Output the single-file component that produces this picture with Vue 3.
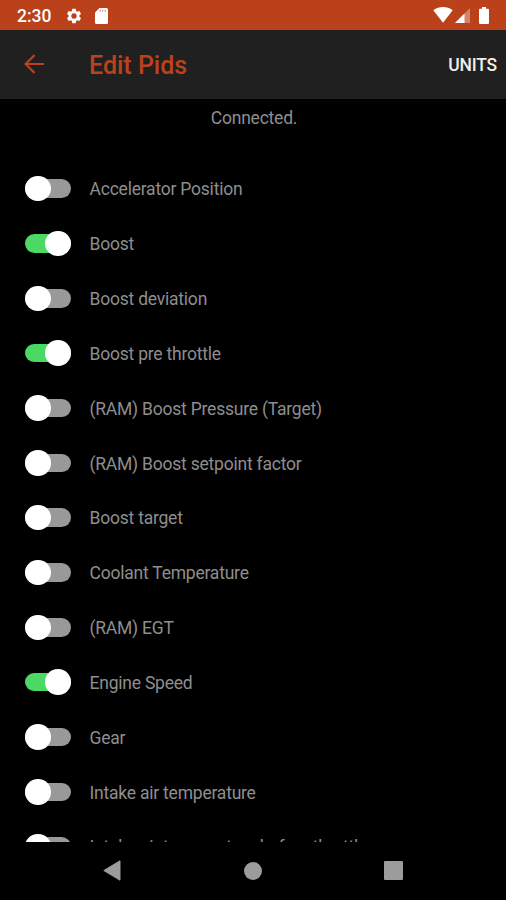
<template>
  <div class="screen">
    <div class="status-bar">
      <span class="time">2:30</span>
      <svg class="gear" viewBox="0 0 24 24" width="18" height="18">
        <path fill="#fff" d="M19.14 12.94c.04-.3.06-.61.06-.94 0-.32-.02-.64-.07-.94l2.03-1.58c.18-.14.23-.41.12-.61l-1.92-3.32c-.12-.22-.37-.29-.59-.22l-2.39.96c-.5-.38-1.03-.7-1.62-.94l-.36-2.54c-.04-.24-.24-.41-.48-.41h-3.84c-.24 0-.43.17-.47.41l-.36 2.54c-.59.24-1.13.57-1.62.94l-2.39-.96c-.22-.08-.47 0-.59.22L2.74 8.87c-.12.21-.08.47.12.61l2.03 1.58c-.05.3-.09.63-.09.94s.02.64.07.94l-2.03 1.58c-.18.14-.23.41-.12.61l1.92 3.32c.12.22.37.29.59.22l2.39-.96c.5.38 1.03.7 1.62.94l.36 2.54c.05.24.24.41.48.41h3.84c.24 0 .44-.17.47-.41l.36-2.54c.59-.24 1.13-.56 1.62-.94l2.39.96c.22.08.47 0 .59-.22l1.92-3.32c.12-.22.07-.47-.12-.61l-2.01-1.58zM12 15.6A3.6 3.6 0 1 1 12 8.4a3.6 3.6 0 0 1 0 7.2z" />
      </svg>
      <svg class="card" viewBox="0 0 13 16" width="13" height="16">
        <path fill="#fff" d="M4.5 0H11.5A1.5 1.5 0 0 1 13 1.5V14.5A1.5 1.5 0 0 1 11.5 16H1.5A1.5 1.5 0 0 1 0 14.5V4.5z" />
        <path stroke="#ba4119" stroke-opacity=".55" stroke-width="1.2" d="M5.2 1.8v2M7.7 1.8v2M10.2 1.8v2" />
      </svg>
      <div class="status-right">
        <svg class="wifi" viewBox="0 0 20 16" width="20" height="16">
          <path fill="#fff" d="M.3 3.3C6-1.1 14-1.1 19.7 3.3L10 15.8z" />
        </svg>
        <svg class="signal" viewBox="0 0 15 15" width="15" height="15">
          <path fill="#fff" fill-opacity=".35" d="M15 0V15H0z" />
          <path fill="#fff" d="M9.5 5.5V15H0z" />
        </svg>
        <svg class="battery" viewBox="0 0 10 17" width="10" height="17">
          <path fill="#fff" d="M3 0h4v1.7h2a1 1 0 0 1 1 1V16a1 1 0 0 1-1 1H1a1 1 0 0 1-1-1V2.7a1 1 0 0 1 1-1h2z" />
        </svg>
      </div>
    </div>

    <header class="toolbar">
      <svg class="back" viewBox="0 0 20 20" width="20" height="20">
        <path fill="none" stroke="#bb421b" stroke-width="2.2" d="M20 10H1.8M10.6 1L1.6 10L10.6 19" />
      </svg>
      <h1 class="title">Edit Pids</h1>
      <button class="units">UNITS</button>
    </header>

    <p class="status">Connected.</p>

    <div class="list">
      <div v-for="pid in pids" :key="pid.name" class="row" @click="pid.on = !pid.on">
        <span class="switch" :class="{ on: pid.on }"><span class="thumb"></span></span>
        <span class="label">{{ pid.name }}</span>
      </div>
    </div>

    <nav class="nav-bar">
      <svg viewBox="0 0 18 21" width="18" height="21">
        <path fill="#9c9c9c" d="M17 .8V20.2L.8 10.5z" stroke="#9c9c9c" stroke-linejoin="round" />
      </svg>
      <span class="home"></span>
      <span class="recent"></span>
    </nav>
  </div>
</template>

<script setup>
import { ref } from 'vue';

const pids = ref([
  { name: 'Accelerator Position', on: false },
  { name: 'Boost', on: true },
  { name: 'Boost deviation', on: false },
  { name: 'Boost pre throttle', on: true },
  { name: '(RAM) Boost Pressure (Target)', on: false },
  { name: '(RAM) Boost setpoint factor', on: false },
  { name: 'Boost target', on: false },
  { name: 'Coolant Temperature', on: false },
  { name: '(RAM) EGT', on: false },
  { name: 'Engine Speed', on: true },
  { name: 'Gear', on: false },
  { name: 'Intake air temperature', on: false },
  { name: 'Intake air temperature before throttle', on: false },
]);
</script>

<style>
body {
  margin: 0;
  background: #000;
}
</style>

<style scoped>
.screen {
  display: flex;
  flex-direction: column;
  width: 506px;
  height: 900px;
  overflow: hidden;
  background: #000;
  font-family: Roboto, sans-serif;
}

.status-bar {
  display: flex;
  align-items: center;
  flex: none;
  height: 30px;
  padding: 1px 17px 0 17px;
  box-sizing: border-box;
  background: #ba4119;
}

.time {
  width: 35px;
  color: #fff;
  font-size: 17.5px;
  font-weight: 500;
}

.gear {
  margin-left: 13px;
}

.card {
  margin-left: 12px;
}

.status-right {
  display: flex;
  align-items: center;
  margin-left: auto;
}

.wifi {
  margin-top: -1px;
}

.signal {
  margin-left: 2px;
}

.battery {
  margin-left: 9px;
}

.toolbar {
  display: flex;
  align-items: center;
  flex: none;
  height: 69px;
  padding: 0 9px 0 24px;
  box-sizing: border-box;
  background: #202020;
}

.back {
  margin-top: -1px;
}

.title {
  margin: 1px 0 0 45px;
  color: #bb421b;
  font-size: 25px;
  font-weight: 500;
}

.units {
  margin-left: auto;
  padding: 0;
  border: none;
  background: none;
  color: #eee;
  font-family: inherit;
  font-size: 17.5px;
  font-weight: 500;
  letter-spacing: -0.2px;
}

.status {
  flex: none;
  height: 62.3px;
  margin: 0;
  padding-left: 2px;
  box-sizing: border-box;
  color: #8e8e8e;
  font-size: 17.5px;
  letter-spacing: -0.22px;
  line-height: 38px;
  text-align: center;
}

.list {
  flex: none;
  height: 680.7px;
  overflow: hidden;
}

.row {
  display: flex;
  align-items: center;
  height: 54.83px;
  padding-left: 25px;
}

.switch {
  display: flex;
  align-items: center;
  width: 45.5px;
  height: 18.5px;
  border-radius: 10px;
  background: #999;
}

.switch.on {
  justify-content: flex-end;
  background: #4bd964;
}

.thumb {
  width: 25.5px;
  height: 25.5px;
  flex: none;
  border-radius: 50%;
  background: #fff;
}

.label {
  margin-left: 19px;
  padding-top: 1.4px;
  color: #8e8e8e;
  font-size: 17.5px;
  letter-spacing: -0.22px;
  white-space: nowrap;
}

.nav-bar {
  display: flex;
  align-items: center;
  justify-content: space-between;
  flex: 1;
  padding: 0 103px 0 103px;
}

.home {
  width: 18px;
  height: 18px;
  border-radius: 50%;
  background: #9c9c9c;
}

.recent {
  width: 19px;
  height: 19px;
  border-radius: 1px;
  background: #9c9c9c;
}
</style>
